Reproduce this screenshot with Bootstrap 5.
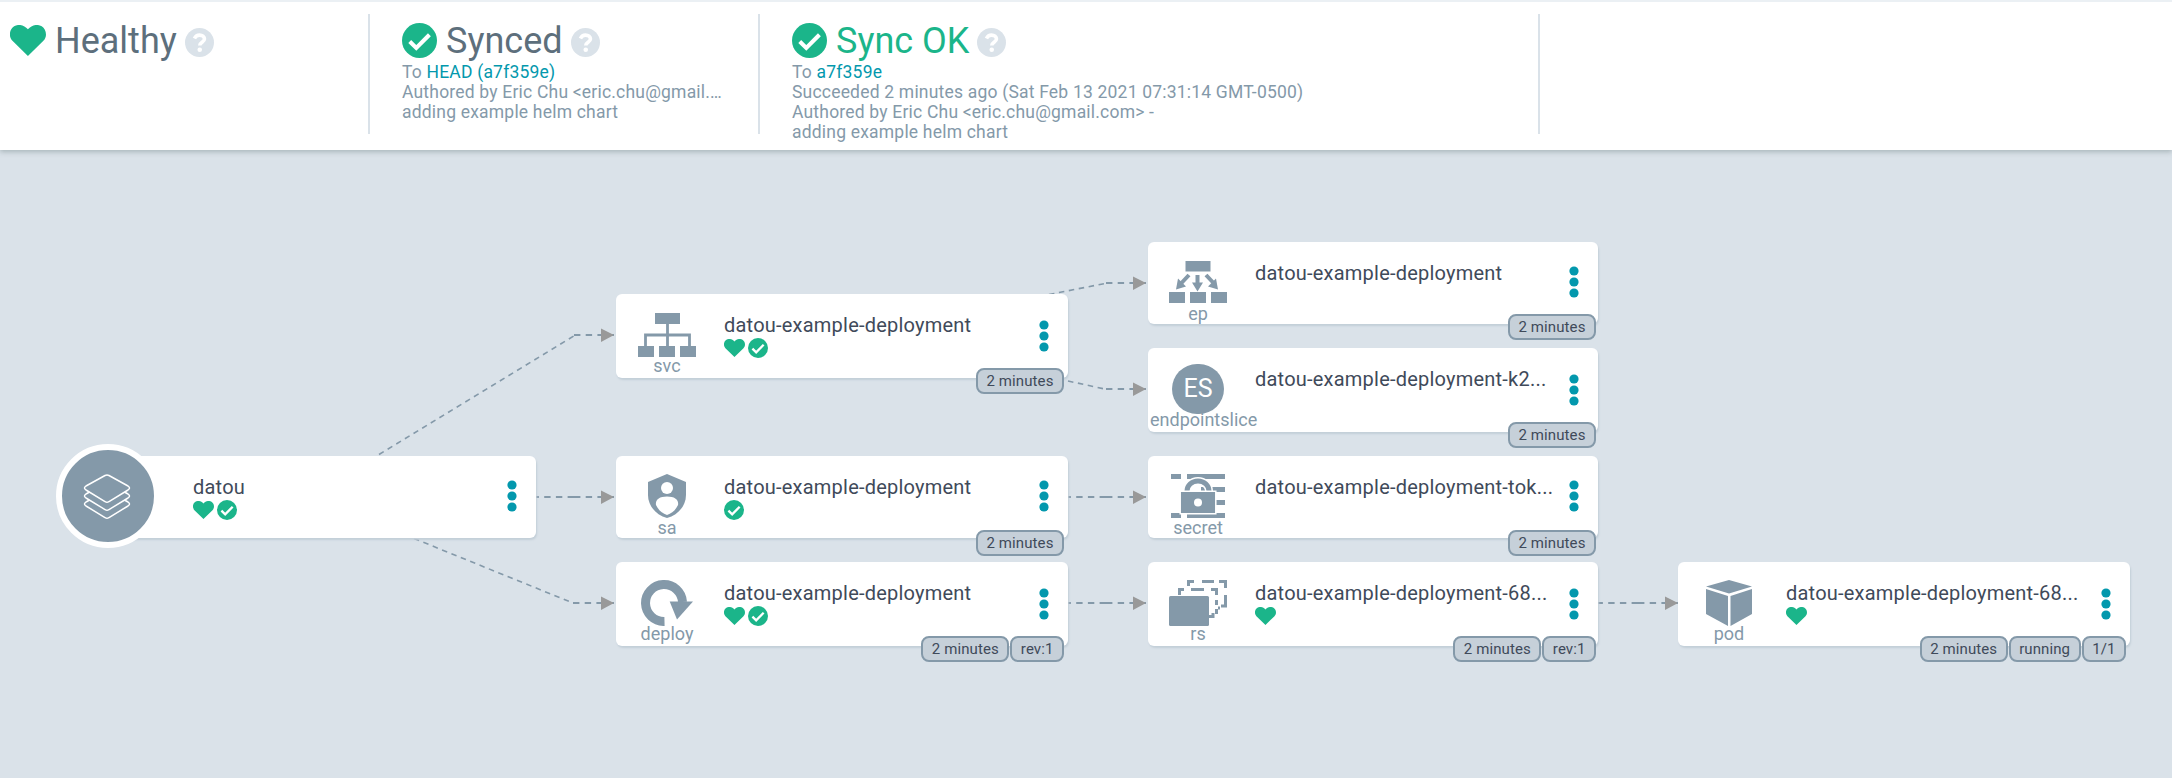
<!DOCTYPE html>
<html lang="en">
<head>
<meta charset="utf-8">
<title>datou</title>
<link href="https://cdn.jsdelivr.net/npm/bootstrap@5.3.0/dist/css/bootstrap.min.css" rel="stylesheet">
<style>
body{font-family:Roboto,"Liberation Sans",sans-serif;background:#dae2e9;color:#363c4a;width:2172px;height:778px;overflow:hidden}
.status-bar{height:150px;border-top:2px solid #ebf0f4;box-shadow:0 2px 5px rgba(90,110,110,.38);position:relative;z-index:2}
.status-item{height:120px;margin-top:12px;border-right:2px solid #dae2e9;font-size:17.5px;line-height:20px;letter-spacing:.2px;color:#8499a9}
.status-item>div{padding-left:32px;padding-right:32px}
.status-title{height:48px;font-size:36px;line-height:48px;letter-spacing:0;color:#5d6f7c}
.status-title span{margin:3px 8px 0 9px}
.status-title .help{margin-top:14px}
.status-item .link{color:#0398ad;text-decoration:none}
.green{color:#1bb58a}
.tree{position:relative;height:628px}
.edges{position:absolute;left:0;top:-150px}
.node{position:absolute;background:#fff;border-radius:6px;box-shadow:1px 2px 2px #c3cfd8}
.kind{width:102px;margin-right:6px;color:#8499a9;font-size:18px;line-height:20px;padding-top:18px}
.third .kind{width:100px;margin-right:7px}
.kind svg{display:block}
.kind span{margin-top:-2px}
.title{font-size:20px;line-height:24px;letter-spacing:.22px;padding-top:19px;color:#3f4a5a}
.marks{gap:3px;height:20px;margin-top:1px}
.marks .heart{margin-top:1px}
.dots{position:absolute;right:19px}
.tags{position:absolute;right:4px;gap:1px}
.third .tags{right:2px}
.tag{height:26px;border:2px solid #8499a9;border-radius:8px;background:#c6d0d9;font-size:15px;line-height:22px;letter-spacing:.1px;padding:0 8.5px;white-space:nowrap;color:#3f4a5a}
.app-icon{position:absolute;left:-28px;top:-12px;width:104px;height:104px;border:6px solid #fff;background:#8499a9}
.letters{width:52px;height:50px;margin-top:-2px;border-radius:25px;background:#8499a9;color:#fff;font-size:25px}
.kind .long-kind{align-self:flex-start;margin:-4px 0 0 2px}
</style>
</head>
<body>
<svg width="0" height="0" class="position-absolute">
<defs>
<symbol id="heart" viewBox="0.3 1.4 23.5 20.8" preserveAspectRatio="none"><path fill="#1bb58a" d="M12 22.2 1.900 12C-.9 9 0 4.300 3 2.300 6 .4 9.700 1.500 12 4.300 14.300 1.500 18 .4 21 2.300 24 4.300 24.900 9 22.100 12Z"/></symbol>
<symbol id="check" viewBox="0 0 24 24"><circle cx="12" cy="12" r="12" fill="#1bb58a"/><path d="M5.300 12.700 9.800 17.100 18.800 8.100" fill="none" stroke="#fff" stroke-width="2.800"/></symbol>
<symbol id="help" viewBox="0 0 24 24"><circle cx="12" cy="12" r="12" fill="#dae2e9"/><path d="M7.800 8.700C8.800 6.700 10.200 5.900 12 5.900c2.400 0 4.100 1.400 4.100 3.300 0 2.600-3.900 2.700-3.900 5.300" fill="none" stroke="#fff" stroke-width="3"/><circle cx="12.200" cy="18" r="1.900" fill="#fff"/></symbol>
<symbol id="dots" viewBox="0 0 10 32"><g fill="#0398ad"><circle cx="5" cy="5" r="4.600"/><circle cx="5" cy="16" r="4.600"/><circle cx="5" cy="27" r="4.600"/></g></symbol>
</defs>
</svg>

<header class="status-bar bg-white d-flex">
  <div class="status-item" style="width:370px"><div class="status-title d-flex" style="padding-left:10px">
    <svg width="36" height="31" style="margin-top:11px"><use href="#heart"/></svg><span>Healthy</span><svg class="help" width="29" height="29"><use href="#help"/></svg></div></div>
  <div class="status-item" style="width:390px"><div>
    <div class="status-title d-flex"><svg width="35" height="35" style="margin-top:9px"><use href="#check"/></svg><span>Synced</span><svg class="help" width="29" height="29"><use href="#help"/></svg></div>
    <div>To <a class="link">HEAD (a7f359e)</a></div><div class="text-nowrap">Authored by Eric Chu &lt;eric.chu@gmail.…</div><div>adding example helm chart</div></div></div>
  <div class="status-item" style="width:780px"><div>
    <div class="status-title d-flex"><svg width="35" height="35" style="margin-top:9px"><use href="#check"/></svg><span class="green">Sync OK</span><svg class="help" width="29" height="29"><use href="#help"/></svg></div>
    <div>To <a class="link">a7f359e</a></div><div>Succeeded 2 minutes ago (Sat Feb 13 2021 07:31:14 GMT-0500)</div><div>Authored by Eric Chu &lt;eric.chu@gmail.com&gt; -</div><div>adding example helm chart</div></div></div>
</header>

<main class="tree">
  <svg class="edges" width="2172" height="778">
    <g fill="none" stroke="#8499a9" stroke-width="1.600" stroke-dasharray="5.500 4.600">
      <path d="M379 454.500 575 335.300"/><path d="M414 538.500 573 603"/><path d="M1049 294.500 1106 283.300"/><path d="M1068 381 1106 389.300"/></g>
    <g fill="none" stroke="#8499a9" stroke-width="1.800" stroke-dasharray="6.400 5.300">
      <path d="M574 335H614M574 497H614M574 497H536M573 603H614M1106 283H1146M1106 389H1146M1106 497H1146M1106 497H1068M1106 603H1146M1106 603H1068M1638 603H1678M1638 603H1598"/></g>
    <g fill="#999"><path id="tip" d="M601 328.500 614 335 601 342Z"/><use href="#tip" y="162"/><use href="#tip" y="268"/><use href="#tip" x="532" y="-52"/><use href="#tip" x="532" y="54"/><use href="#tip" x="532" y="162"/><use href="#tip" x="532" y="268"/><use href="#tip" x="1064" y="268"/></g>
  </svg>

  <div class="node d-flex" style="left:84px;top:306px;width:452px;height:82px">
    <div class="app-icon rounded-circle"><svg width="92" height="92" fill="#8499a9" stroke="#fff" stroke-width="1.500"><path id="sheet" d="M43 41.500 24 52Q21 54 24 56L43 67.500Q45 69 47 67.500L66 56Q69 54 66 52L47 41.500Q45 40.500 43 41.500Z"/><use href="#sheet" y="-8"/><use href="#sheet" y="-16"/></svg></div>
    <div class="kind"></div><div class="ps-1"><div class="title" style="margin-left:-3px">datou</div><div class="marks d-flex" style="margin-left:-3px"><svg class="heart" width="21" height="18"><use href="#heart"/></svg><svg width="20" height="20"><use href="#check"/></svg></div></div>
    <svg class="dots" width="10" height="32" style="top:24px"><use href="#dots"/></svg>
  </div>

  <div class="node d-flex" style="left:616px;top:144px;width:452px;height:84px">
    <div class="kind d-flex flex-column align-items-center"><svg width="60" height="46" fill="#8499a9"><path d="M18 1h25v11H18ZM1 34h16v11H1ZM22 34h16v11H22ZM43 34h16v11H43Z"/><path d="M8.500 34V23H52.500V34M30.500 12V34" fill="none" stroke="#8499a9" stroke-width="2.800"/></svg><span>svc</span></div>
    <div><div class="title">datou-example-deployment</div><div class="marks d-flex"><svg class="heart" width="21" height="18"><use href="#heart"/></svg><svg width="20" height="20"><use href="#check"/></svg></div></div>
    <svg class="dots" width="10" height="32" style="top:26px"><use href="#dots"/></svg><div class="tags d-flex" style="top:74px"><span class="tag">2 minutes</span></div>
  </div>

  <div class="node d-flex" style="left:616px;top:306px;width:452px;height:82px">
    <div class="kind d-flex flex-column align-items-center"><svg width="40" height="46"><path fill="#8499a9" d="M20 0 39 8V21C39 32 31 41 20 44 9 41 1 32 1 21V8Z"/><circle cx="20" cy="14" r="6" fill="#fff"/><path fill="#fff" d="M9 31C8 26 12 22.500 20 22.500S32 26 31 31C28 37 25 39 20 41 15 39 12 37 9 31Z"/></svg><span>sa</span></div>
    <div><div class="title">datou-example-deployment</div><div class="marks d-flex"><svg width="20" height="20"><use href="#check"/></svg></div></div>
    <svg class="dots" width="10" height="32" style="top:24px"><use href="#dots"/></svg><div class="tags d-flex" style="top:74px"><span class="tag">2 minutes</span></div>
  </div>

  <div class="node d-flex" style="left:616px;top:412px;width:452px;height:84px">
    <div class="kind d-flex flex-column align-items-center"><svg width="54" height="46"><path d="M24.500 41.500A18.500 18.500 0 1 1 42.500 22" fill="none" stroke="#8499a9" stroke-width="9"/><path fill="#8499a9" d="M29.700 21.500H53L37 39.500Z"/></svg><span>deploy</span></div>
    <div><div class="title">datou-example-deployment</div><div class="marks d-flex"><svg class="heart" width="21" height="18"><use href="#heart"/></svg><svg width="20" height="20"><use href="#check"/></svg></div></div>
    <svg class="dots" width="10" height="32" style="top:26px"><use href="#dots"/></svg><div class="tags d-flex" style="top:74px"><span class="tag">2 minutes</span><span class="tag">rev:1</span></div>
  </div>

  <div class="node third d-flex" style="left:1148px;top:92px;width:450px;height:82px">
    <div class="kind d-flex flex-column align-items-center"><svg width="60" height="46" fill="#8499a9"><path d="M17.500 1h25v10.500H17.500ZM1 32h16v11H1ZM22 32h16v11H22ZM43 32h16v11H43Z"/><path d="M21 15 13 23.500M29.500 15V24M38 15 46 23.500" fill="none" stroke="#8499a9" stroke-width="4"/><path d="M8 29.500 10 18.500 18 26.500ZM24 22.500H35L29.500 31.500ZM50 29.500 48 18.500 40 26.500Z"/></svg><span>ep</span></div>
    <div><div class="title">datou-example-deployment</div></div>
    <svg class="dots" width="10" height="32" style="top:24px"><use href="#dots"/></svg><div class="tags d-flex" style="top:72px"><span class="tag">2 minutes</span></div>
  </div>

  <div class="node third d-flex" style="left:1148px;top:198px;width:450px;height:84px">
    <div class="kind d-flex flex-column align-items-center"><div class="letters d-flex align-items-center justify-content-center">ES</div><span class="long-kind">endpointslice</span></div>
    <div><div class="title">datou-example-deployment-k2...</div></div>
    <svg class="dots" width="10" height="32" style="top:26px"><use href="#dots"/></svg><div class="tags d-flex" style="top:74px"><span class="tag">2 minutes</span></div>
  </div>

  <div class="node third d-flex" style="left:1148px;top:306px;width:450px;height:82px">
    <div class="kind d-flex flex-column align-items-center"><svg width="54" height="46"><path fill="#8499a9" d="M0 0H10V5H0ZM16 0H54V5H16ZM30 13H54V18H30ZM40 26H54V31H40ZM0 39H10V44H0ZM16 39H54V44H16Z"/><path d="M16 18V17A11 10 0 0 1 38 17V18" fill="none" stroke="#fff" stroke-width="8"/><path d="M16 18V17A11 10 0 0 1 38 17V18" fill="none" stroke="#8499a9" stroke-width="5"/><path fill="#8499a9" stroke="#fff" stroke-width="1.500" d="M9.200 17.200H44.800V39.800H9.200Z"/><circle cx="27" cy="28.500" r="4" fill="#fff"/></svg><span>secret</span></div>
    <div><div class="title">datou-example-deployment-tok...</div></div>
    <svg class="dots" width="10" height="32" style="top:24px"><use href="#dots"/></svg><div class="tags d-flex" style="top:74px"><span class="tag">2 minutes</span></div>
  </div>

  <div class="node third d-flex" style="left:1148px;top:412px;width:450px;height:84px">
    <div class="kind d-flex flex-column align-items-center"><svg width="58" height="46" fill="none" stroke="#8499a9" stroke-width="3"><rect y="16" width="40" height="30" rx="1.500" fill="#8499a9" stroke="none"/><path d="M10.500 15V9.500H15M22 9.500H35M42 9.500H47.500V15M47.500 20V25M47.500 29V34M40 36.500H44V33M49 28H51M19.500 6V1.500H25M33 1.500H45M50 1.500H56.500V8M56.500 15V26H52"/></svg><span>rs</span></div>
    <div><div class="title">datou-example-deployment-68...</div><div class="marks d-flex"><svg class="heart" width="21" height="18"><use href="#heart"/></svg></div></div>
    <svg class="dots" width="10" height="32" style="top:26px"><use href="#dots"/></svg><div class="tags d-flex" style="top:74px"><span class="tag">2 minutes</span><span class="tag">rev:1</span></div>
  </div>

  <div class="node d-flex" style="left:1678px;top:412px;width:452px;height:84px">
    <div class="kind d-flex flex-column align-items-center"><svg width="46" height="46" fill="#8499a9"><path d="M23 0 46 6.500 23 13.500 0 6.500ZM0 9 22 16V46L0 34ZM46 9 24.500 16V46L46 34Z"/></svg><span>pod</span></div>
    <div><div class="title">datou-example-deployment-68...</div><div class="marks d-flex"><svg class="heart" width="21" height="18"><use href="#heart"/></svg></div></div>
    <svg class="dots" width="10" height="32" style="top:26px"><use href="#dots"/></svg><div class="tags d-flex" style="top:74px"><span class="tag">2 minutes</span><span class="tag">running</span><span class="tag">1/1</span></div>
  </div>
</main>
<script src="https://cdn.jsdelivr.net/npm/bootstrap@5.3.0/dist/js/bootstrap.bundle.min.js"></script>
</body>
</html>
